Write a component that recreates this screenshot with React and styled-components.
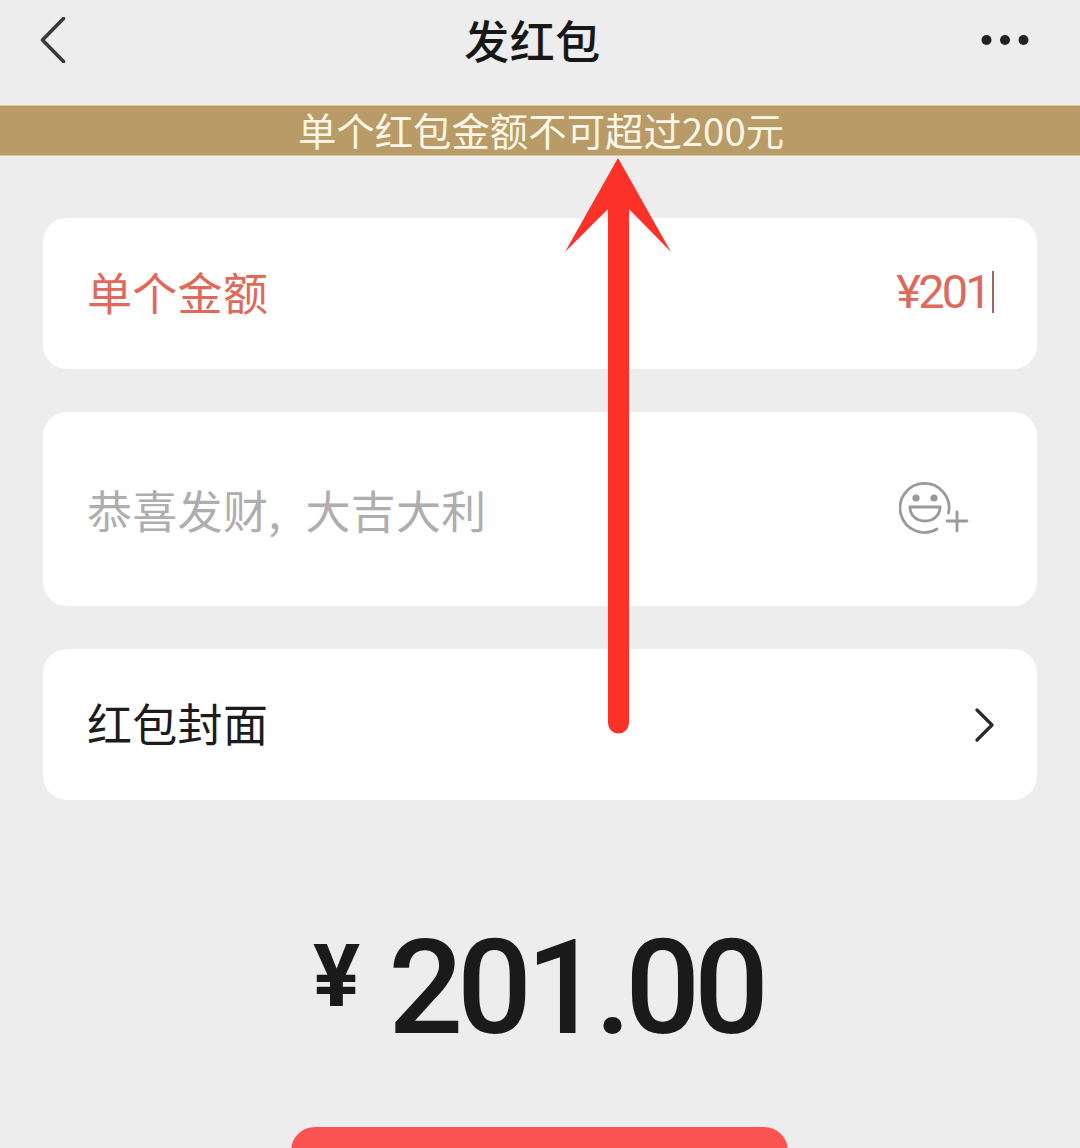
import styled, { createGlobalStyle } from 'styled-components';

const GlobalStyle = createGlobalStyle`
    html, body {
        margin: 0;
        padding: 0;
        background: #ededed;
    }
`
const cjk = `"Noto Sans CJK SC", "Noto Sans", sans-serif`

const Page = styled.div`
    position: relative;
    width: 1080px;
    height: 1148px;
    overflow: hidden;
    background: #ededed;
    font-family: ${cjk};
    display: flex;
    flex-direction: column;
`
const Header = styled.header`
    height: 105px;
    flex: none;
    display: flex;
    align-items: center;
    justify-content: space-between;
    padding: 0 51px 26px 40px;
    box-sizing: border-box;
`
const Title = styled.h1`
    margin: 0 0 0 18px;
    font-size: 45px;
    font-weight: 500;
    line-height: 60px;
    color: #171717;
    letter-spacing: 0.5px;
`
const Banner = styled.div`
    height: 51px;
    flex: none;
    background: #b99b68;
    border-top: 1px solid #dcc8a0;
    border-bottom: 1px solid #d8c39c;
    box-sizing: border-box;
    display: flex;
    align-items: center;
    justify-content: center;
    color: #fbf6e6;
    font-size: 38.4px;
    line-height: 50px;
    padding: 0 0 3px 2px;
`
const Cards = styled.div`
    display: flex;
    flex-direction: column;
    gap: 43px;
    margin: 62px 43px 0;
`
const Card = styled.div`
    height: ${p => p.$h}px;
    background: #fff;
    border-radius: 24px;
    display: flex;
    align-items: ${p => p.$top ? 'flex-start' : 'center'};
    justify-content: space-between;
    padding: ${p => p.$top ? '68px' : '0'} ${p => p.$pr}px 0 44px;
    box-sizing: border-box;
`
const Label = styled.span`
    font-size: 45px;
    line-height: 60px;
    letter-spacing: 0.3px;
    word-spacing: 14px;
    margin-bottom: 4px;
    color: ${p => p.$color};
`
const Value = styled.span`
    display: flex;
    align-items: center;
    margin-bottom: 4px;
    font-family: Roboto, "Liberation Sans", sans-serif;
    font-size: 47px;
    line-height: 60px;
    color: #dd6a5c;
    letter-spacing: -2.8px;
`
const Caret = styled.i`
    display: inline-block;
    width: 2px;
    height: 42px;
    margin-left: 3px;
    background: #a0665e;
`
const EmojiIcon = styled.svg`
    flex: none;
`
const Total = styled.div`
    display: flex;
    justify-content: center;
    align-items: flex-start;
    margin-top: 115px;
    padding-right: 4px;
    color: #1a1a1a;
    font-family: Roboto, "Liberation Sans", sans-serif;
    font-weight: 500;
`
const Yen = styled.span`
    font-size: 88px;
    font-weight: 700;
    line-height: 122px;
    margin-right: 28px;
`
const Amount = styled.span`
    font-size: 132px;
    line-height: 147px;
    letter-spacing: -6.2px;
`
const SendButton = styled.div`
    width: 497px;
    height: 80px;
    flex: none;
    margin: 65px 0 0 291px;
    background: #fb5352;
    border-radius: 24px 24px 0 0;
`
const ArrowOverlay = styled.svg`
    position: absolute;
    left: 0;
    top: 0;
    pointer-events: none;
`

export default function App() {
    return (
        <Page>
            <GlobalStyle />
            <Header>
                <svg width="26" height="46" viewBox="0 0 26 46" fill="none">
                    <path d="M23.5 1.500 2.500 23l21 21.500" stroke="#3a3a3a" strokeWidth="3.6" strokeLinecap="round" strokeLinejoin="round" />
                </svg>
                <Title>发红包</Title>
                <svg width="48" height="12" viewBox="0 0 48 12">
                    <circle cx="5.500" cy="6" r="5" fill="#222" />
                    <circle cx="24" cy="6" r="5" fill="#222" />
                    <circle cx="42.500" cy="6" r="5" fill="#222" />
                </svg>
            </Header>
            <Banner>单个红包金额不可超过200元</Banner>
            <Cards>
                <Card $h={151} $pr={43}>
                    <Label $color="#e0695a">单个金额</Label>
                    <Value>¥201<Caret /></Value>
                </Card>
                <Card $h={194} $pr={68} $top>
                    <Label $color="#aeaeae">恭喜发财, 大吉大利</Label>
                    <EmojiIcon width="70" height="54" viewBox="0 0 70 54" fill="none" stroke="#9a9a9a" strokeWidth="2.8" strokeLinecap="round">
                        <path d="M49.500 33A24.500 24.500 0 1 0 38 49" />
                        <circle cx="17" cy="18" r="3.600" fill="#9a9a9a" stroke="none" />
                        <circle cx="35" cy="18" r="3.600" fill="#9a9a9a" stroke="none" />
                        <path d="M11 27h30c0 8-6 14-15 14s-15-6-15-14Z" />
                        <path d="M48 41h20M58 32v19" />
                    </EmojiIcon>
                </Card>
                <Card $h={151} $pr={43}>
                    <Label $color="#1c1c1c">红包封面</Label>
                    <svg width="20" height="34" viewBox="0 0 20 34" fill="none">
                        <path d="M3 2l15 15L3 32" stroke="#2a2a2a" strokeWidth="3.2" strokeLinecap="round" strokeLinejoin="round" />
                    </svg>
                </Card>
            </Cards>
            <Total>
                <Yen>¥</Yen>
                <Amount>201.00</Amount>
            </Total>
            <SendButton />
            <ArrowOverlay width="1080" height="1148" viewBox="0 0 1080 1148">
                <path d="M618 158 671 252 629 209V723a10.500 10.500 0 0 1-21 0V209L565 252Z" fill="#fc3128" />
            </ArrowOverlay>
        </Page>
    )
}
